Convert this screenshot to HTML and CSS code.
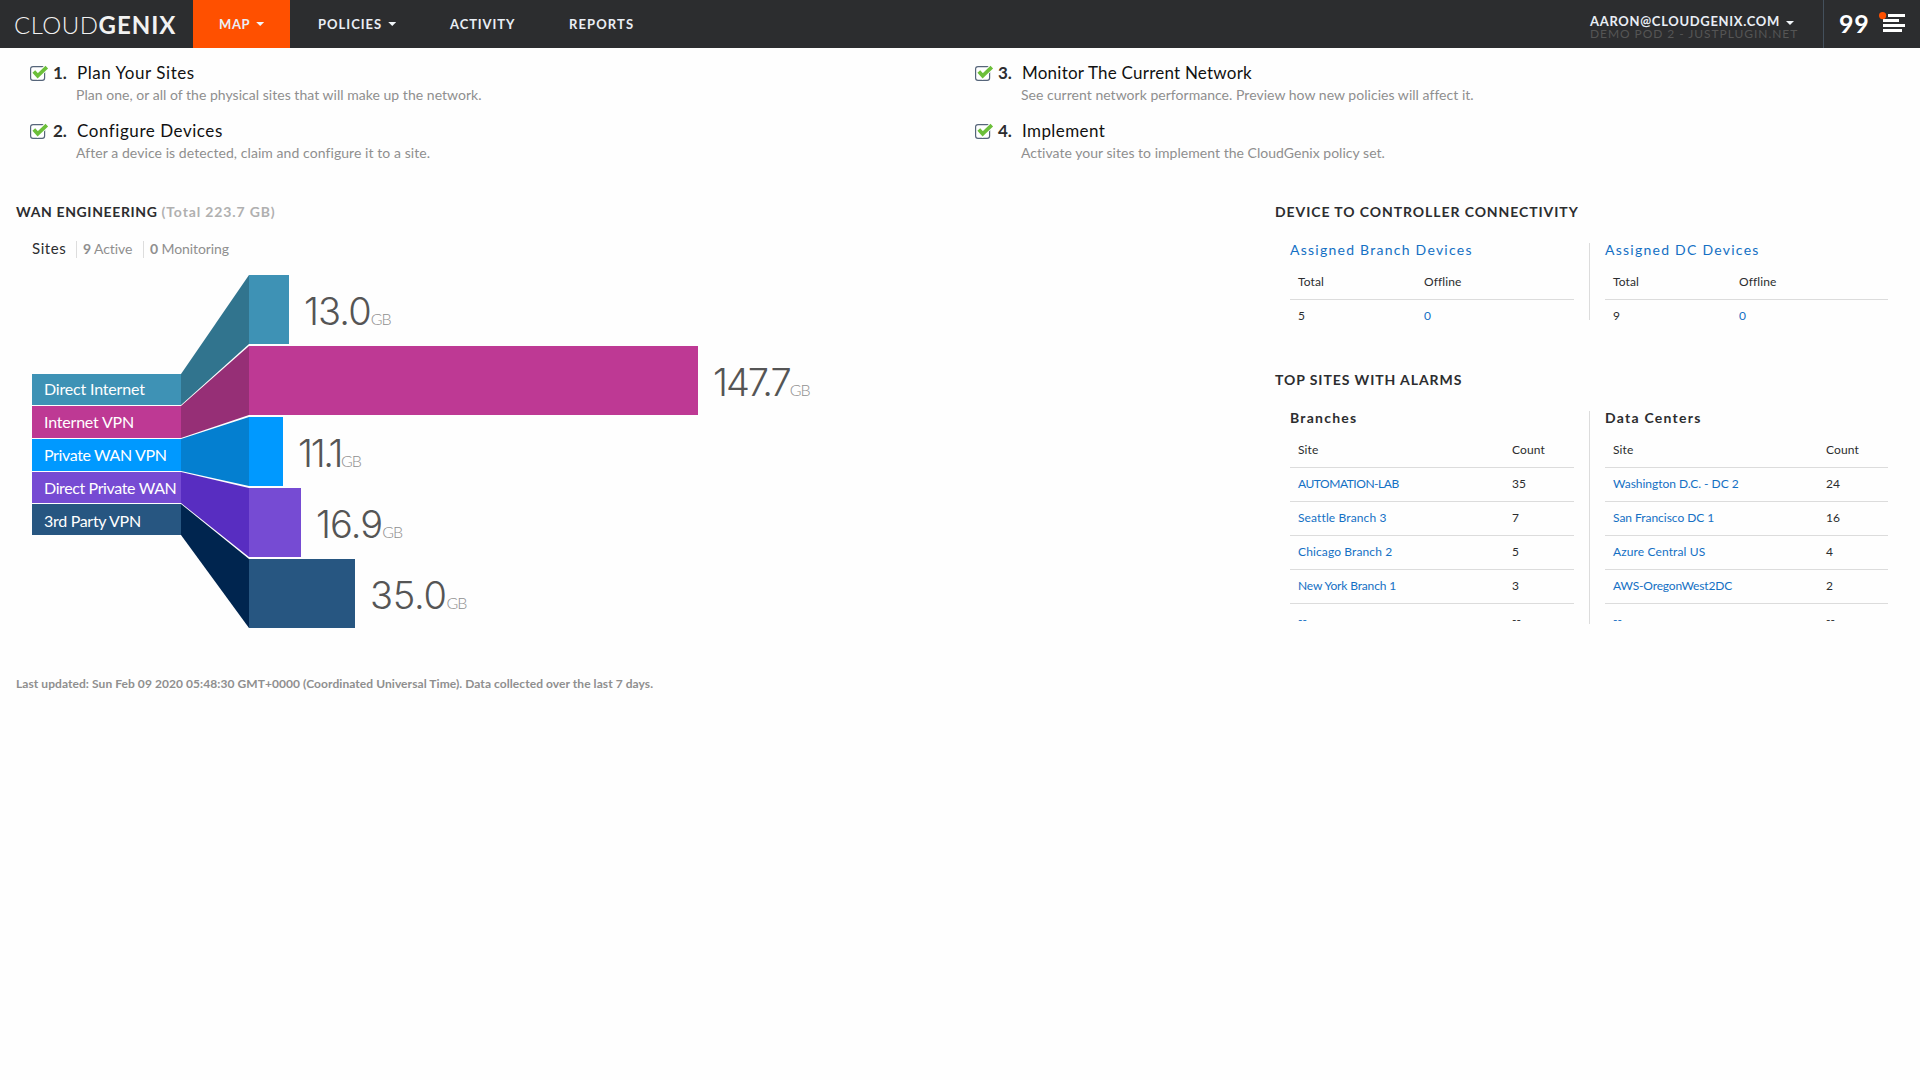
FILE: index.html
```html
<!DOCTYPE html>
<html lang="en">
<head>
<meta charset="utf-8">
<title>CloudGenix</title>
<link rel="stylesheet" href="styles.css">
</head>
<body>
<header class="topbar">
  <a class="logo"><span class="logo-light">CLOUD</span><span class="logo-bold">GENIX</span></a>
  <nav class="nav">
    <a class="nav-item nav-map active">MAP<i class="caret"></i></a>
    <a class="nav-item nav-policies">POLICIES<i class="caret"></i></a>
    <a class="nav-item nav-activity">ACTIVITY</a>
    <a class="nav-item nav-reports">REPORTS</a>
  </nav>
  <div class="account">
    <div class="account-user">AARON@CLOUDGENIX.COM<i class="caret"></i></div>
    <div class="account-tenant">DEMO POD 2 - JUSTPLUGIN.NET</div>
  </div>
  <div class="alerts">
    <span class="alerts-count">99</span>
    <svg class="alerts-icon" width="28" height="22" viewBox="0 0 28 22">
      <path fill="#fff" d="M9 3h17v3H9zM4 8h16v3H4zM4 13h22v3H4zM4 18h19v3H4z"/>
      <circle cx="3.6" cy="4.6" r="3.6" fill="#ff5000"/>
    </svg>
  </div>
</header>

<svg class="defs" width="0" height="0">
  <symbol id="check" viewBox="0 0 20 18">
    <rect x="0.6" y="2.6" width="14" height="13.8" rx="2.4" fill="#fff" stroke="#56657a" stroke-width="1.2"/>
    <path d="M3.8 7.6l3.9 4.4L17 2.6" fill="none" stroke="#fff" stroke-width="5.4"/>
    <path d="M3.8 7.4l3.9 4.4L16.8 3.2" fill="none" stroke="#6cbf3a" stroke-width="3.7"/>
  </symbol>
</svg>

<main>
  <section class="steps">
    <div class="step">
      <svg class="check"><use href="#check"/></svg><span class="num">1.</span>
      <div><h3 class="s1">Plan Your Sites</h3><p>Plan one, or all of the physical sites that will make up the network.</p></div>
    </div>
    <div class="step">
      <svg class="check"><use href="#check"/></svg><span class="num">3.</span>
      <div><h3 class="s3">Monitor The Current Network</h3><p>See current network performance. Preview how new policies will affect it.</p></div>
    </div>
    <div class="step">
      <svg class="check"><use href="#check"/></svg><span class="num">2.</span>
      <div><h3 class="s2">Configure Devices</h3><p class="wide">After a device is detected, claim and configure it to a site.</p></div>
    </div>
    <div class="step">
      <svg class="check"><use href="#check"/></svg><span class="num">4.</span>
      <div><h3 class="s4">Implement</h3><p>Activate your sites to implement the CloudGenix policy set.</p></div>
    </div>
  </section>

  <div class="dashboard">
    <section class="wan">
      <h2 class="wan-title">WAN ENGINEERING <span>(Total 223.7 GB)</span></h2>
      <div class="sites"><b>Sites</b><span class="active-count"><em>9</em> Active</span><span class="mon-count"><em>0</em> Monitoring</span></div>
      <div class="chart">
        <div class="labels">
          <div class="label direct-internet">Direct Internet</div>
          <div class="label internet-vpn">Internet VPN</div>
          <div class="label private-vpn">Private WAN VPN</div>
          <div class="label direct-private">Direct Private WAN</div>
          <div class="label third-party">3rd Party VPN</div>
        </div>
        <svg class="funnel" width="68" height="353" viewBox="0 0 68 353">
          <polygon fill="#31748e" points="0,99 68,0 68,69 0,130"/>
          <polygon fill="#962f76" points="0,131 68,71 68,140 0,163"/>
          <polygon fill="#047fd0" points="0,164 68,142 68,211 0,196"/>
          <polygon fill="#582dc1" points="0,197 68,213 68,282 0,228"/>
          <polygon fill="#00254f" points="0,229 68,284 68,353 0,260"/>
        </svg>
        <div class="bars">
          <div class="bar-row direct-internet"><div class="bar" style="width:40px"></div><span class="value">13.0</span><span class="unit">GB</span></div>
          <div class="bar-row internet-vpn"><div class="bar" style="width:449px"></div><span class="value">147.7</span><span class="unit">GB</span></div>
          <div class="bar-row private-vpn"><div class="bar" style="width:34px"></div><span class="value">11.1</span><span class="unit">GB</span></div>
          <div class="bar-row direct-private"><div class="bar" style="width:52px"></div><span class="value">16.9</span><span class="unit">GB</span></div>
          <div class="bar-row third-party"><div class="bar" style="width:106px"></div><span class="value">35.0</span><span class="unit">GB</span></div>
        </div>
      </div>
      <p class="updated">Last updated: Sun Feb 09 2020 05:48:30 GMT+0000 (Coordinated Universal Time). Data collected over the last 7 days.</p>
    </section>

    <aside>
      <h2>DEVICE TO CONTROLLER CONNECTIVITY</h2>
      <div class="panel devices">
        <div class="col">
          <h4><a>Assigned Branch Devices</a></h4>
          <div class="row"><span>Total</span><span>Offline</span></div>
          <div class="row"><span>5</span><a>0</a></div>
        </div>
        <div class="col">
          <h4><a>Assigned DC Devices</a></h4>
          <div class="row"><span>Total</span><span>Offline</span></div>
          <div class="row"><span>9</span><a>0</a></div>
        </div>
      </div>
      <h2 class="alarms-title">TOP SITES WITH ALARMS</h2>
      <div class="panel alarms">
        <div class="col">
          <h4>Branches</h4>
          <div class="row"><span>Site</span><span>Count</span></div>
          <div class="row"><a class="caps">AUTOMATION-LAB</a><span>35</span></div>
          <div class="row"><a>Seattle Branch 3</a><span>7</span></div>
          <div class="row"><a>Chicago Branch 2</a><span>5</span></div>
          <div class="row"><a class="tight">New York Branch 1</a><span>3</span></div>
          <div class="row"><a>--</a><span>--</span></div>
        </div>
        <div class="col">
          <h4>Data Centers</h4>
          <div class="row"><span>Site</span><span>Count</span></div>
          <div class="row"><a class="plain">Washington D.C. - DC 2</a><span>24</span></div>
          <div class="row"><a class="plain">San Francisco DC 1</a><span>16</span></div>
          <div class="row"><a>Azure Central US</a><span>4</span></div>
          <div class="row"><a class="tight">AWS-OregonWest2DC</a><span>2</span></div>
          <div class="row"><a>--</a><span>--</span></div>
        </div>
      </div>
    </aside>
  </div>
</main>
</body>
</html>
```
FILE: styles.css
```css
* { box-sizing: border-box; }
body {
  margin: 0;
  min-height: 1080px;
  background: #fefefe;
  color: #2c2d2f;
  font: 14px/20px Lato, "Liberation Sans", sans-serif;
}
h2, h3, h4, p { margin: 0; font-weight: 400; }
a { text-decoration: none; }
.defs { position: absolute; }

/* Top bar */
.topbar { display: flex; height: 48px; background: #2c2d2f; color: #fff; }
.logo { width: 193px; padding-left: 14px; font-size: 24px; line-height: 49px; white-space: nowrap; color: #f2f2f2; }
.logo-light { font-weight: 300; letter-spacing: .5px; }
.logo-bold { font-weight: 700; letter-spacing: 1px; }
.nav { display: flex; }
.nav-item {
  display: flex;
  height: 48px;
  font-size: 13px;
  font-weight: 700;
  line-height: 48px;
  letter-spacing: 1px;
  color: #e9eef5;
}
.nav-map { width: 97px; padding-left: 26px; letter-spacing: .6px; }
.nav-policies { width: 160px; padding-left: 28px; }
.nav-activity { width: 119px; letter-spacing: .9px; }
.nav-reports { letter-spacing: 1.1px; }
.active { background: #ff5000; }
.caret {
  width: 8px;
  height: 4px;
  margin: 22px 0 0 6px;
  background: #f2f6fa;
  clip-path: polygon(0 0, 100% 0, 50% 100%);
}
.account { margin-left: auto; width: 233px; padding-top: 15px; white-space: nowrap; }
.account-user { display: flex; font-size: 13px; font-weight: 700; line-height: 13px; letter-spacing: .68px; color: #e9eef5; }
.account-user .caret { margin: 6px 0 0 6px; }
.account-tenant { font-size: 12px; line-height: 12px; letter-spacing: .94px; color: #555; }
.alerts { display: flex; width: 97px; border-left: 1px solid #44505c; padding-left: 15px; }
.alerts-count { width: 40px; font-size: 25px; font-weight: 700; line-height: 46px; letter-spacing: .8px; }
.alerts-icon { margin-top: 11px; }

/* Setup steps */
.steps { display: grid; grid-template-columns: 945px 1fr; row-gap: 13px; padding: 12px 0 0 30px; }
.step { display: flex; }
.check { width: 20px; height: 18px; margin-top: 4px; }
.num { width: 26px; padding-left: 3px; font-size: 17px; font-weight: 700; line-height: 26px; }
.step h3 { height: 24px; padding-left: 1px; font-size: 17px; line-height: 26px; letter-spacing: .55px; color: #111; }
.step h3.s3 { letter-spacing: .23px; }
.step h3.s4 { letter-spacing: .4px; }
.step p { margin-top: 1px; letter-spacing: .03px; color: #8f8f8f; }
.step p.wide { letter-spacing: .07px; }

/* Dashboard */
.dashboard { display: grid; grid-template-columns: 1259px 1fr; padding: 39px 0 0 16px; }
h2 { font-size: 14px; font-weight: 700; letter-spacing: .92px; }
.wan-title { letter-spacing: .63px; }
.wan-title span { letter-spacing: .86px; color: #b0b0b0; }
.sites { display: flex; height: 17px; margin: 19px 0 17px 16px; line-height: 15px; color: #8f8f8f; }
.sites b { width: 44px; font-size: 15px; font-weight: 400; letter-spacing: .6px; color: #2c2d2f; }
.sites em { font-style: normal; font-weight: 700; }
.sites span { padding-left: 6px; border-left: 1px solid #ddd; }
.active-count { width: 67px; letter-spacing: -.1px; }
.mon-count { letter-spacing: -.1px; }

.chart { display: flex; align-items: center; height: 353px; margin-left: 16px; }
.labels { display: grid; grid-template-rows: 31px 32px 32px 31px 31px; row-gap: 1px; width: 149px; transform: translateY(3px); }
.label { padding-left: 12px; font-size: 16px; line-height: 32px; letter-spacing: -.38px; color: #fff; white-space: nowrap; }
.label.direct-internet { line-height: 30px; letter-spacing: -.18px; }
.label.internet-vpn { letter-spacing: -.2px; }
.label.third-party { height: 31px; line-height: 33px; letter-spacing: -.3px; }
.label.direct-internet, .direct-internet .bar { background: #3e92b5; }
.label.internet-vpn, .internet-vpn .bar { background: #be3994; }
.label.private-vpn, .private-vpn .bar { background: #0099ff; }
.label.direct-private, .direct-private .bar { background: #764bd3; }
.label.third-party, .third-party .bar { background: #275681; }
.bars { display: grid; row-gap: 2px; }
.bar-row { display: flex; height: 69px; }
.value {
  padding: 2px 0 0 15px;
  font-family: Inter, sans-serif;
  font-size: 38px;
  font-weight: 300;
  line-height: 69px;
  letter-spacing: -.9px;
  color: #555;
}
.internet-vpn .value { letter-spacing: -2px; }
.private-vpn .value { letter-spacing: -2.3px; }
.third-party .value { letter-spacing: -.3px; }
.unit { padding-top: 9px; font-size: 16px; font-weight: 300; line-height: 69px; letter-spacing: -1px; color: #8f8f8f; }
.updated { margin-top: 48px; font-size: 12px; font-weight: 700; line-height: 16px; letter-spacing: .07px; color: #8f8f8f; }

/* Right column */
.panel { display: grid; grid-template-columns: 299px 299px; margin: 21px 0 0 15px; }
.devices { height: 77px; }
.alarms { height: 213px; }
.alarms-title { margin-top: 50px; }
.col { min-height: 0; }
.col + .col { padding-left: 15px; border-left: 1px solid #dcdcdc; }
.col:first-child { padding-right: 15px; }
.col h4 { margin-bottom: 9px; font-size: 14px; line-height: 14px; letter-spacing: 1.25px; }
.alarms h4 { font-weight: 700; }
.row {
  display: grid;
  grid-template-columns: 214px 1fr;
  height: 34px;
  padding: 0 8px;
  border-bottom: 1px solid #dcdcdc;
  font-size: 12px;
  line-height: 32px;
  letter-spacing: .12px;
}
.row:last-child { border-bottom: 0; }
.devices .row { grid-template-columns: 126px 1fr; }
.col + .col .row { grid-template-columns: 213px 1fr; }
.devices .col + .col .row { grid-template-columns: 126px 1fr; }
.caps { letter-spacing: -.46px; }
.tight { letter-spacing: -.15px; }
.plain { letter-spacing: -.03px; }
aside a { color: #1470c4; }
```
